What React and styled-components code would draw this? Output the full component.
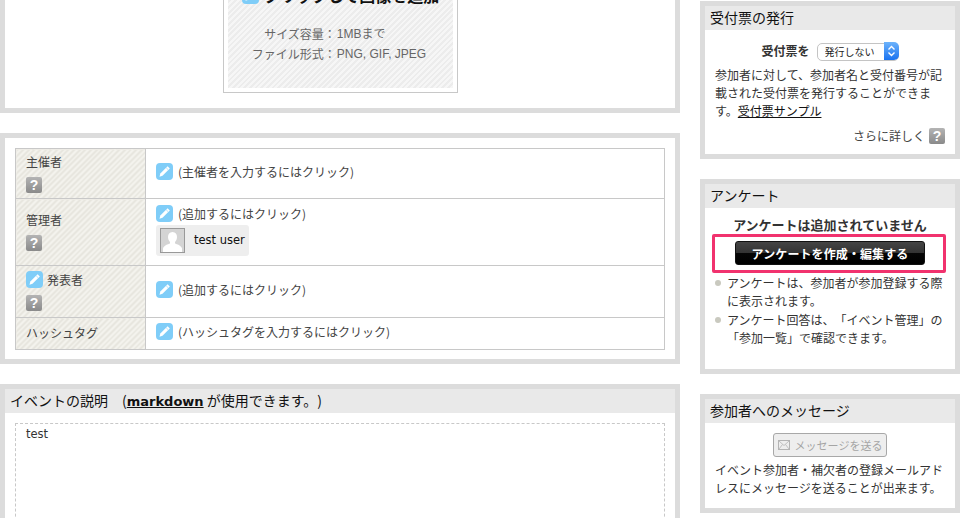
import React from "react";
import styled, { createGlobalStyle } from "styled-components";

const JP = `"Noto Sans CJK JP", "Liberation Sans", sans-serif`;
const LATIN = `"DejaVu Sans", "Noto Sans CJK JP", sans-serif`;

const GlobalStyle = createGlobalStyle`
  html, body {
    margin: 0;
    padding: 0;
    height: 518px;
    overflow: hidden;
    background: #fff;
  }
  body {
    font-family: ${JP};
    font-size: 12px;
    color: #333;
    text-spacing-trim: space-all;
  }
`;

const Page = styled.div`
  display: grid;
  grid-template-columns: 680px 260px;
  column-gap: 20px;
  align-items: start;
  width: 962px;
  height: 518px;
  overflow: hidden;
`;

const MainColumn = styled.div`
  display: flex;
  flex-direction: column;
  gap: 20px;
  margin-top: -60px;
`;

const SideColumn = styled.div`
  display: flex;
  flex-direction: column;
  gap: 20px;
  padding-top: 1px;
`;

const Panel = styled.section`
  border: 5px solid #dcdcdc;
  background: #fff;
  box-sizing: border-box;
  height: ${(p) => p.$height}px;
`;

const PanelTitle = styled.h2`
  margin: 0;
  height: 24px;
  padding-left: 5px;
  background: #e9e9e9;
  font-size: 14px;
  font-weight: 400;
  line-height: 22px;
  color: #111;
`;

const UploadRow = styled.div`
  display: flex;
  justify-content: center;
  padding-left: 1px;
`;

const UploadBox = styled.div`
  width: 235px;
  height: 148px;
  box-sizing: border-box;
  border: 1px solid #c8c8c8;
  padding: 4px;
`;

const UploadInner = styled.div`
  height: 100%;
  display: flex;
  flex-direction: column;
  align-items: center;
  background: repeating-linear-gradient(135deg, #ececec 0 2px, #f6f6f6 2px 4px);
`;

const UploadHead = styled.div`
  display: flex;
  align-items: center;
  gap: 5px;
  height: 24px;
  margin-top: 33px;
  font-size: 16px;
  font-weight: 700;
  color: #111;
`;

const UploadMeta = styled.dl`
  margin: 17px 3px 0 0;
  display: grid;
  grid-template-columns: auto auto;
  line-height: 20px;
  color: #666;
`;

const MetaKey = styled.dt`
  text-align: right;
`;

const MetaValue = styled.dd`
  margin: 0;
  padding-left: 1px;
  font-family: "Liberation Sans", ${JP};
  font-size: 12px;
`;

const TablePanelBody = styled.div`
  padding: 10px;
`;

const InfoTable = styled.table`
  width: 650px;
  border-collapse: collapse;
  table-layout: fixed;
`;

const LabelCell = styled.th`
  width: 130px;
  height: ${(p) => p.$height}px;
  box-sizing: border-box;
  padding: 0 10px 2px;
  border: 1px solid #c8c8c8;
  background: repeating-linear-gradient(135deg, #e7e5de 0 2px, #f4f3ee 2px 4px);
  font-weight: 400;
  text-align: left;
  vertical-align: middle;
  color: #444;
`;

const LabelLine = styled.div`
  display: flex;
  align-items: center;
  gap: 4px;
  line-height: 17px;
  margin-bottom: 7px;
`;

const ValueCell = styled.td`
  box-sizing: border-box;
  padding: 0 10px 4px;
  border: 1px solid #c8c8c8;
  vertical-align: middle;
`;

const EditLine = styled.div`
  display: flex;
  align-items: center;
  gap: 5px;
  line-height: 17px;
  color: #444;
`;

const UserChip = styled.div`
  display: flex;
  align-items: center;
  gap: 9px;
  width: 93px;
  height: 31px;
  box-sizing: border-box;
  margin-top: 3px;
  padding-left: 4px;
  border-radius: 3px;
  background: #eee;
  font-family: ${LATIN};
  font-size: 11.5px;
  color: #111;
`;

const Avatar = styled.svg`
  width: 25px;
  height: 25px;
  flex: none;
`;

const EditorBody = styled.div`
  padding: 10px;
`;

const EditorArea = styled.div`
  height: 300px;
  box-sizing: border-box;
  border: 1px dashed #c8c8c8;
  padding: 2px 10px;
  font-family: ${LATIN};
  font-size: 11.5px;
  line-height: 16px;
  color: #333;
`;

const TitleSpacer = styled.span`
  margin-left: 14px;
`;

const DocLink = styled.a`
  font-family: ${LATIN};
  font-size: 13px;
  font-weight: 700;
  color: #111;
  text-decoration: underline;
`;

const SideBody = styled.div`
  padding: ${(p) => p.$pad || "12px 10px 0"};
  line-height: 18px;
  color: #333;
`;

const TicketRow = styled.div`
  display: flex;
  align-items: center;
  justify-content: center;
  gap: 7px;
  height: 18px;
  margin-bottom: 6px;
  font-weight: 700;
`;

const SelectWrap = styled.span`
  position: relative;
  display: inline-block;
  width: 82px;
  height: 18px;
`;

const TicketSelect = styled.select`
  appearance: none;
  width: 100%;
  height: 100%;
  box-sizing: border-box;
  padding: 0 0 0 7px;
  border: 1px solid #c4c4c4;
  border-radius: 5px;
  background: #fff;
  font-family: ${JP};
  font-size: 10px;
  color: #222;
`;

const SelectArrow = styled.span`
  position: absolute;
  top: 0;
  right: 0;
  width: 15px;
  height: 18px;
  display: flex;
  align-items: center;
  justify-content: center;
  border-radius: 0 5px 5px 0;
  background: linear-gradient(#6db3fb, #1a73f0);
  pointer-events: none;
`;

const Paragraph = styled.p`
  margin: 0;
`;

const TextLink = styled.a`
  color: #111;
  text-decoration: underline;
`;

const MoreRow = styled.div`
  display: flex;
  align-items: center;
  justify-content: flex-end;
  gap: 4px;
  margin-top: 7px;
  color: #444;
`;

const SurveyNote = styled.div`
  font-size: 13px;
  font-weight: 700;
  line-height: 18px;
  text-align: center;
  color: #333;
`;

const SurveyHighlight = styled.div`
  position: relative;
  display: flex;
  justify-content: center;
  height: 24px;
  padding: 7px 0 8px 2px;
  margin: 0 -1px 1px -3px;
`;

const HighlightFrame = styled.span`
  position: absolute;
  inset: 0;
  border: 3px solid #f1326e;
  border-radius: 2px;
  pointer-events: none;
`;

const DarkButton = styled.button`
  width: 190px;
  height: 24px;
  padding: 0;
  border: 1px solid #111;
  border-radius: 3px;
  background: linear-gradient(#444 0, #333 50%, #050505 50%, #000 100%);
  font-family: ${JP};
  font-size: 12px;
  font-weight: 700;
  letter-spacing: 0.1px;
  color: #fff;
`;

const BulletList = styled.ul`
  list-style: none;
  margin: 0;
  padding: 0;
`;

const Bullet = styled.li`
  position: relative;
  padding-left: 12px;
  margin-bottom: 1px;
  line-height: 18px;
  &::before {
    content: "";
    position: absolute;
    left: 0;
    top: 6px;
    width: 6px;
    height: 6px;
    border-radius: 50%;
    background: #c9c9bf;
  }
`;

const MessageRow = styled.div`
  display: flex;
  justify-content: center;
  margin-bottom: 4px;
`;

const MessageButton = styled.button`
  display: flex;
  align-items: center;
  justify-content: center;
  gap: 5px;
  width: 114px;
  height: 24px;
  padding: 0;
  border: 1px solid #a8a8a8;
  border-radius: 3px;
  background: #eee;
  font-family: ${JP};
  font-size: 11px;
  white-space: nowrap;
  color: #a5a5a5;
`;

const HelpBadge = styled.span`
  display: flex;
  align-items: center;
  justify-content: center;
  width: 16px;
  height: 16px;
  flex: none;
  border-radius: 2px;
  background: linear-gradient(#b4b4b4, #8a8a8a);
  font-family: "Liberation Sans", sans-serif;
  font-size: 14px;
  font-weight: 700;
  line-height: 16px;
  color: #fff;
`;

const EditIconSvg = styled.svg`
  width: 17px;
  height: 17px;
  flex: none;
`;

function EditIcon() {
  return (
    <EditIconSvg viewBox="0 0 17 17">
      <rect width="17" height="17" rx="4" fill="#7fcdf8" />
      <path d="M11.6 3.2l2.2 2.2-7.3 7.4-3 .9.8-3.1z" fill="#fff" />
      <path d="M10.2 4.8l2.1 2.1" stroke="#7fcdf8" strokeWidth="0.6" />
    </EditIconSvg>
  );
}

function SpinnerArrows() {
  return (
    <svg width="9" height="12" viewBox="0 0 9 12">
      <path d="M1.5 4.5L4.5 1.5 7.5 4.5M1.5 7.5L4.5 10.5 7.5 7.5" fill="none" stroke="#fff" strokeWidth="1.4" />
    </svg>
  );
}

function MailIcon() {
  return (
    <svg width="12" height="10" viewBox="0 0 12 10">
      <rect x="0.5" y="0.5" width="11" height="9" fill="none" stroke="#b4b4b4" />
      <path d="M1 1l5 4.500 5-4.500M1 9l3.500-4.500M11 9L7.500 4.500" fill="none" stroke="#b4b4b4" strokeWidth="0.8" />
    </svg>
  );
}

export default function App() {
  return (
    <>
      <GlobalStyle />
      <Page>
        <MainColumn>
          <Panel $height={173}>
            <UploadRow>
              <UploadBox>
                <UploadInner>
                  <UploadHead>
                    <EditIcon />
                    クリックして画像を追加
                  </UploadHead>
                  <UploadMeta>
                    <MetaKey>サイズ容量：</MetaKey>
                    <MetaValue>1MBまで</MetaValue>
                    <MetaKey>ファイル形式：</MetaKey>
                    <MetaValue>PNG, GIF, JPEG</MetaValue>
                  </UploadMeta>
                </UploadInner>
              </UploadBox>
            </UploadRow>
          </Panel>

          <Panel $height={231}>
            <TablePanelBody>
              <InfoTable>
                <tbody>
                  <tr>
                    <LabelCell $height={50}>
                      <LabelLine>主催者</LabelLine>
                      <HelpBadge>?</HelpBadge>
                    </LabelCell>
                    <ValueCell>
                      <EditLine>
                        <EditIcon />
                        (主催者を入力するにはクリック)
                      </EditLine>
                    </ValueCell>
                  </tr>
                  <tr>
                    <LabelCell $height={67}>
                      <LabelLine>管理者</LabelLine>
                      <HelpBadge>?</HelpBadge>
                    </LabelCell>
                    <ValueCell>
                      <EditLine>
                        <EditIcon />
                        (追加するにはクリック)
                      </EditLine>
                      <UserChip>
                        <Avatar viewBox="0 0 25 25">
                          <rect x="0.5" y="0.5" width="24" height="24" fill="#d4d4d4" stroke="#999" />
                          <path d="M12.5 4c3 0 4.5 2.2 4.5 5 0 2.2-1 4-2 5v1.500c2 1 6 1.500 7 5V24H3v-3.500c1-3.500 5-4 7-5V14c-1-1-2-2.800-2-5 0-2.800 1.500-5 4.500-5z" fill="#fff" />
                        </Avatar>
                        test user
                      </UserChip>
                    </ValueCell>
                  </tr>
                  <tr>
                    <LabelCell $height={52}>
                      <LabelLine>
                        <EditIcon />
                        <span>発表者</span>
                      </LabelLine>
                      <HelpBadge>?</HelpBadge>
                    </LabelCell>
                    <ValueCell>
                      <EditLine>
                        <EditIcon />
                        (追加するにはクリック)
                      </EditLine>
                    </ValueCell>
                  </tr>
                  <tr>
                    <LabelCell $height={32}>ハッシュタグ</LabelCell>
                    <ValueCell>
                      <EditLine>
                        <EditIcon />
                        (ハッシュタグを入力するにはクリック)
                      </EditLine>
                    </ValueCell>
                  </tr>
                </tbody>
              </InfoTable>
            </TablePanelBody>
          </Panel>

          <Panel $height={340}>
            <PanelTitle>
              イベントの説明
              <TitleSpacer>(</TitleSpacer>
              <DocLink href="#">markdown</DocLink> が使用できます。)
            </PanelTitle>
            <EditorBody>
              <EditorArea>test</EditorArea>
            </EditorBody>
          </Panel>
        </MainColumn>

        <SideColumn>
          <Panel $height={158}>
            <PanelTitle>受付票の発行</PanelTitle>
            <SideBody>
              <TicketRow>
                受付票を
                <SelectWrap>
                  <TicketSelect defaultValue="no">
                    <option value="no">発行しない</option>
                    <option value="yes">発行する</option>
                  </TicketSelect>
                  <SelectArrow>
                    <SpinnerArrows />
                  </SelectArrow>
                </SelectWrap>
              </TicketRow>
              <Paragraph>
                参加者に対して、参加者名と受付番号が記載された受付票を発行することができます。
                <TextLink href="#">受付票サンプル</TextLink>
              </Paragraph>
              <MoreRow>
                さらに詳しく
                <HelpBadge>?</HelpBadge>
              </MoreRow>
            </SideBody>
          </Panel>

          <Panel $height={195}>
            <PanelTitle>アンケート</PanelTitle>
            <SideBody $pad="8px 10px 0">
              <SurveyNote>アンケートは追加されていません</SurveyNote>
              <SurveyHighlight>
                <HighlightFrame />
                <DarkButton>アンケートを作成・編集する</DarkButton>
              </SurveyHighlight>
              <BulletList>
                <Bullet>アンケートは、参加者が参加登録する際に表示されます。</Bullet>
                <Bullet>アンケート回答は、「イベント管理」の「参加一覧」で確認できます。</Bullet>
              </BulletList>
            </SideBody>
          </Panel>

          <Panel $height={119}>
            <PanelTitle>参加者へのメッセージ</PanelTitle>
            <SideBody $pad="10px 10px 0">
              <MessageRow>
                <MessageButton>
                  <MailIcon />
                  メッセージを送る
                </MessageButton>
              </MessageRow>
              <Paragraph>イベント参加者・補欠者の登録メールアドレスにメッセージを送ることが出来ます。</Paragraph>
            </SideBody>
          </Panel>
        </SideColumn>
      </Page>
    </>
  );
}
